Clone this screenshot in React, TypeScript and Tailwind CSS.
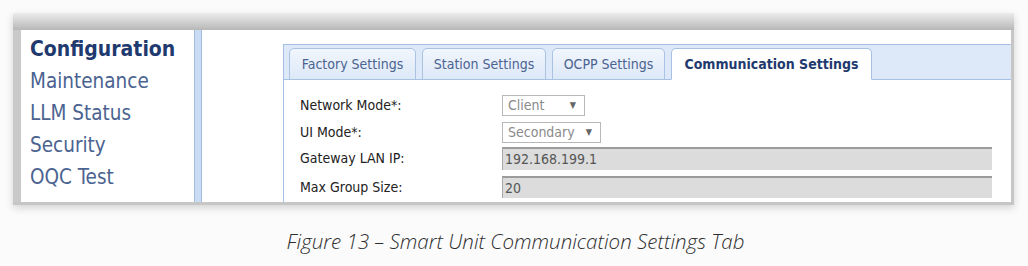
export default function App() {
  const ui = "font-['DejaVu_Sans_Condensed','Liberation_Sans',sans-serif]";
  const tabs = [
    { label: "Factory Settings", w: "w-[127px]", active: false },
    { label: "Station Settings", w: "w-[124px]", active: false },
    { label: "OCPP Settings", w: "w-[113px]", active: false },
    { label: "Communication Settings", w: "w-[201px]", active: true },
  ];
  const nav = ["Maintenance", "LLM Status", "Security", "OQC Test"];
  return (
    <div className="w-[1028px] h-[266px] bg-[#fbfbfb] overflow-hidden">
      <div className="pt-[13px] pl-[13px]">
        <div className="w-[1001px] shadow-[0_3px_8px_rgba(0,0,0,0.16)]">
          <div className="h-[17px] bg-gradient-to-b from-[#ececec] via-[#d2d2d2] to-[#b7b7b7]" />
          <div className={`flex h-[172px] border-l-[8px] border-l-[#c9c9c9] border-r-[3px] border-r-[#c6c6c6] bg-white ${ui}`}>
            <div className="w-[173px] shrink-0 pl-[9px] pt-[3px]">
              <div className="h-[32px] leading-[32px] text-[21px] font-bold text-[#1f3a6e]">Configuration</div>
              {nav.map((n) => (
                <div key={n} className="h-[32px] leading-[32px] text-[20.5px] text-[#4b6390]">
                  {n}
                </div>
              ))}
            </div>
            <div className="w-[8px] shrink-0 bg-[#cadcf3] border-x border-[#a4bcdd]" />
            <div className="flex-1 min-w-0 overflow-hidden pl-[81px] pt-[14px]">
              <div className="h-full border-t border-l border-[#a6c1e3] w-[740px]">
                <div className="flex items-end h-[35px] pl-[5px] gap-[6px] bg-[#dde9f9] border-b border-[#a6c1e3]">
                  {tabs.map((t) => (
                    <div
                      key={t.label}
                      className={`${t.w} h-[32px] -mb-px shrink-0 flex items-center justify-center rounded-t-[5px] border ${
                        t.active
                          ? "bg-white border-[#a6c1e3] border-b-white font-bold text-[#1f3a6e] text-[14px]"
                          : "bg-gradient-to-b from-[#f1f6fd] to-[#dde8f7] border-[#aac3e3] text-[#4b6390] text-[14px]"
                      }`}
                    >
                      {t.label}
                    </div>
                  ))}
                </div>
                <div className="pl-[16px] pt-[15px] text-[14px] text-[#222]">
                  <div className="flex items-center h-[21px]">
                    <div className="w-[202px]">Network Mode*:</div>
                    <div className="w-[83px] h-[21px] border border-[#b8b8b8] bg-white flex items-center justify-between pl-[5px] pr-[8px] text-[#8a8a8a]">
                      <span>Client</span>
                      <span className="text-[9px] text-[#666]">▼</span>
                    </div>
                  </div>
                  <div className="flex items-center h-[21px] mt-[6px]">
                    <div className="w-[202px]">UI Mode*:</div>
                    <div className="w-[99px] h-[21px] border border-[#b8b8b8] bg-white flex items-center justify-between pl-[5px] pr-[8px] text-[#8a8a8a]">
                      <span>Secondary</span>
                      <span className="text-[9px] text-[#666]">▼</span>
                    </div>
                  </div>
                  <div className="flex items-center h-[23px] mt-[4px]">
                    <div className="w-[202px]">Gateway LAN IP:</div>
                    <div className="w-[490px] h-[23px] bg-[#dcdcdc] border-t-2 border-l border-t-[#9c9c9c] border-l-[#a8a8a8] flex items-center pl-[2px] text-[#555]">
                      192.168.199.1
                    </div>
                  </div>
                  <div className="flex items-center h-[22px] mt-[6px]">
                    <div className="w-[202px]">Max Group Size:</div>
                    <div className="w-[490px] h-[22px] bg-[#dcdcdc] border-t-2 border-l border-t-[#9c9c9c] border-l-[#a8a8a8] flex items-center pl-[2px] text-[#555]">
                      20
                    </div>
                  </div>
                </div>
              </div>
            </div>
          </div>
          <div className="h-[3px] bg-[#c6c6c6]" />
        </div>
      </div>
      <div className="mt-[24px] text-center text-[20.5px] leading-[24px] italic font-light text-[#2e2e2e] font-['Open_Sans','Liberation_Sans',sans-serif] pl-[3px]">
        Figure 13 – Smart Unit Communication Settings Tab
      </div>
    </div>
  );
}
